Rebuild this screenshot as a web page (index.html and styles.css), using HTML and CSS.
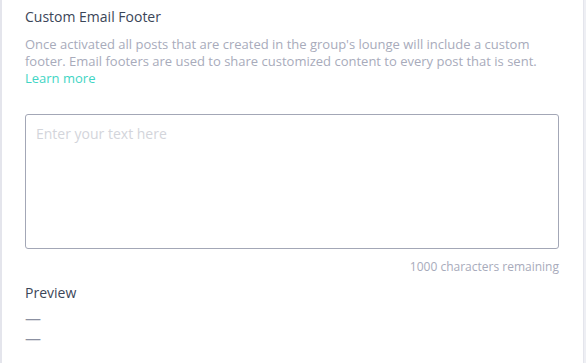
FILE: index.html
```html
<!DOCTYPE html>
<html lang="en">
<head>
    <meta charset="UTF-8">
    <title>Custom Email Footer</title>
    <link rel="stylesheet" href="styles.css">
</head>
<body>
    <div class="card">
        <h2 class="card-title">Custom Email Footer</h2>
        <p class="card-description">
            Once activated all posts that are created in the group's lounge will include a custom
            footer. Email footers are used to share customized content to every post that is sent.
            <a href="#" class="learn-more">Learn more</a>
        </p>

        <textarea class="footer-input" placeholder="Enter your text here"></textarea>
        <div class="char-count">1000 characters remaining</div>

        <h3 class="preview-title">Preview</h3>
        <div class="preview-lines">
            <div class="preview-line">&mdash;</div>
            <div class="preview-line">&mdash;</div>
        </div>
    </div>
</body>
</html>
```

FILE: styles.css
```css
:root {
    --page-bg: #eeeff4;
    --card-border: #e4e5ec;
    --title-color: #3b4658;
    --muted-color: #a8abbb;
    --accent-color: #3fd5c4;
    --input-border: #a3a7b6;
}

body {
    margin: 0;
    background-color: var(--page-bg);
    font-family: 'Open Sans', Lato, sans-serif;
}

.card {
    width: 584px;
    height: 363px;
    box-sizing: border-box;
    background: #ffffff;
    border-left: 2px solid var(--card-border);
    border-right: 1px solid var(--card-border);
    padding: 7px 24px 0 23px;
}

.card-title {
    margin: 0;
    font-size: 14px;
    font-weight: 400;
    line-height: 20px;
    color: var(--title-color);
}

.card-description {
    margin: 9px 0 0;
    font-size: 13px;
    line-height: 17px;
    color: var(--muted-color);
}

.learn-more {
    display: block;
    color: var(--accent-color);
    text-decoration: none;
}

.footer-input {
    display: block;
    width: 100%;
    height: 135px;
    box-sizing: border-box;
    margin-top: 27px;
    padding: 9px 10px;
    border: 1px solid var(--input-border);
    border-radius: 3px;
    font-family: inherit;
    font-size: 14px;
    resize: none;
}

.footer-input::placeholder {
    color: #d3d5db;
}

.char-count {
    margin-top: 10px;
    text-align: right;
    font-size: 12px;
    line-height: 16px;
    color: var(--muted-color);
}

.preview-title {
    margin: 9px 0 0;
    font-size: 14px;
    font-weight: 400;
    line-height: 18px;
    color: var(--title-color);
}

.preview-lines {
    margin-top: 6px;
}

.preview-line {
    font-size: 16px;
    line-height: 20px;
    color: #8b90a1;
}
```
